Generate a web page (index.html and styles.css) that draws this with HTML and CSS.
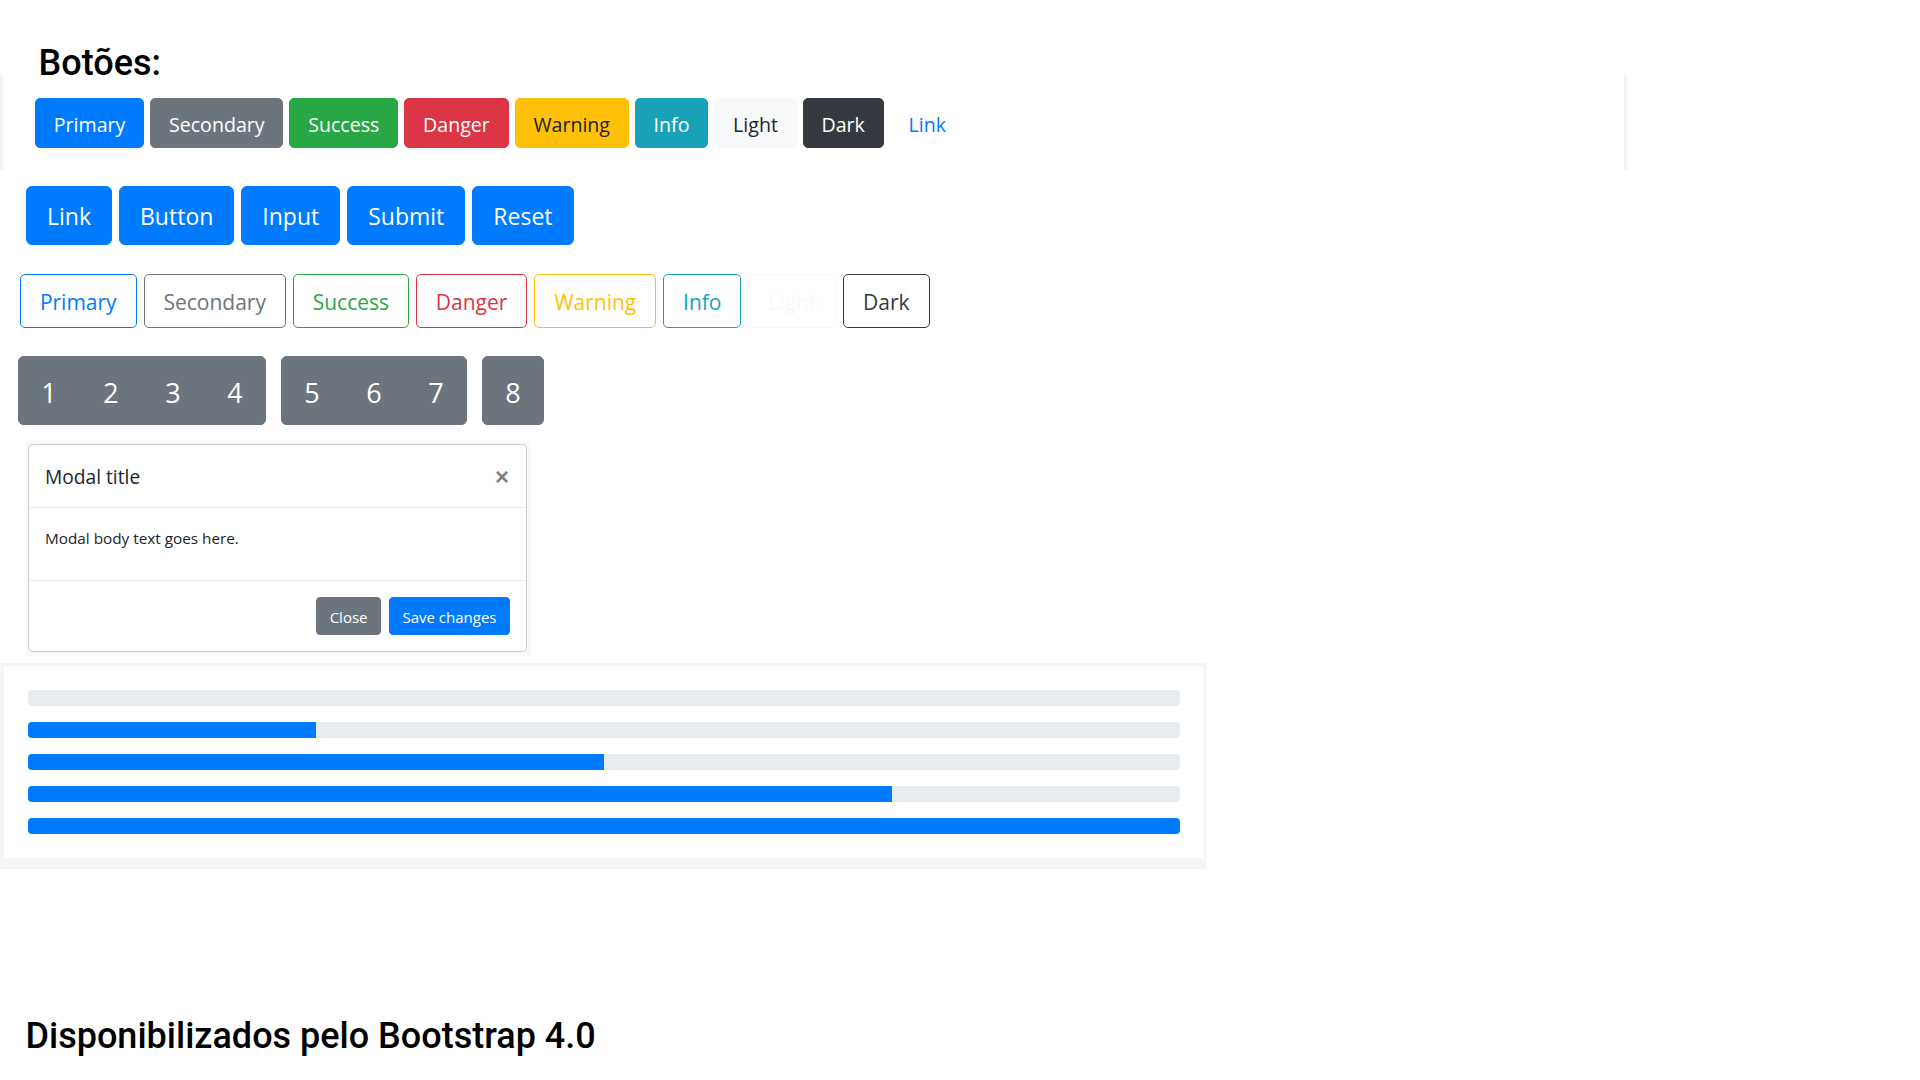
FILE: index.html
```html
<!DOCTYPE html>
<html lang="pt-BR">
<head>
<meta charset="utf-8">
<title>Botões</title>
<link rel="stylesheet" href="styles.css">
</head>
<body>
<h3 class="title">Botões:</h3>

<div class="btn-bar">
  <button class="btn btn-primary">Primary</button>
  <button class="btn btn-secondary">Secondary</button>
  <button class="btn btn-success">Success</button>
  <button class="btn btn-danger">Danger</button>
  <button class="btn btn-warning">Warning</button>
  <button class="btn btn-info">Info</button>
  <button class="btn btn-light">Light</button>
  <button class="btn btn-dark">Dark</button>
  <button class="btn btn-link">Link</button>
</div>

<div class="row-lg">
  <a class="btn-lg" href="#">Link</a>
  <button class="btn-lg" type="button">Button</button>
  <input class="btn-lg" type="button" value="Input">
  <input class="btn-lg" type="submit" value="Submit">
  <input class="btn-lg" type="reset" value="Reset">
</div>

<div class="row-outline">
  <button class="btn-o o-primary">Primary</button>
  <button class="btn-o o-secondary">Secondary</button>
  <button class="btn-o o-success">Success</button>
  <button class="btn-o o-danger">Danger</button>
  <button class="btn-o o-warning">Warning</button>
  <button class="btn-o o-info">Info</button>
  <button class="btn-o o-light">Light</button>
  <button class="btn-o o-dark">Dark</button>
</div>

<div class="toolbar">
  <div class="group">
    <button class="gbtn">1</button>
    <button class="gbtn">2</button>
    <button class="gbtn">3</button>
    <button class="gbtn">4</button>
  </div>
  <div class="group">
    <button class="gbtn">5</button>
    <button class="gbtn">6</button>
    <button class="gbtn">7</button>
  </div>
  <div class="group">
    <button class="gbtn">8</button>
  </div>
</div>

<div class="modal-wrap">
  <div class="modal">
    <div class="modal-header">
      <h5 class="modal-title">Modal title</h5>
      <span class="close">×</span>
    </div>
    <div class="modal-body">
      <p>Modal body text goes here.</p>
    </div>
    <div class="modal-footer">
      <button class="mbtn mbtn-secondary">Close</button>
      <button class="mbtn mbtn-primary">Save changes</button>
    </div>
  </div>
</div>

<div class="progress-card">
  <div class="progress-inner">
    <div class="progress"><div class="progress-bar" style="width:0%"></div></div>
    <div class="progress"><div class="progress-bar" style="width:25%"></div></div>
    <div class="progress"><div class="progress-bar" style="width:50%"></div></div>
    <div class="progress"><div class="progress-bar" style="width:75%"></div></div>
    <div class="progress"><div class="progress-bar" style="width:100%"></div></div>
  </div>
</div>

<h3 class="footer-title">Disponibilizados pelo Bootstrap 4.0</h3>
</body>
</html>
```

FILE: styles.css
```css
* { box-sizing: border-box; }

body {
  margin: 0;
  font-family: "Open Sans", "Noto Sans", sans-serif;
  color: #212529;
  background: #fff;
}

.title {
  margin: 0 0 0 38.5px;
  padding-top: 52px;
  font-family: Roboto, "Liberation Sans", sans-serif;
  font-weight: 500;
  font-size: 36px;
  line-height: 23px;
  color: #000;
}

/* first row */
.btn-bar {
  width: 1627px;
  height: 95px;
  border-left: 3px solid #f4f4f5;
  border-right: 3px solid #f4f4f5;
  padding: 23px 0 0 32px;
  display: flex;
  gap: 6px;
  align-items: flex-start;
}

.btn {
  height: 50px;
  padding: 3.5px 17.8px 0;
  display: inline-flex;
  align-items: center;
  border: 1px solid transparent;
  border-radius: 5px;
  font-family: "Open Sans", "Noto Sans", sans-serif;
  font-size: 19.6px;
  line-height: 30px;
  color: #fff;
  background: none;
}
.btn-primary { background: #007bff; border-color: #007bff; }
.btn-secondary { background: #6c757d; border-color: #6c757d; }
.btn-success { background: #28a745; border-color: #28a745; }
.btn-danger { background: #dc3545; border-color: #dc3545; }
.btn-warning { background: #ffc107; border-color: #ffc107; color: #212529; }
.btn-info { background: #17a2b8; border-color: #17a2b8; }
.btn-light { background: #f8f9fa; border-color: #f8f9fa; color: #212529; }
.btn-dark { background: #343a40; border-color: #343a40; }
.btn-link { color: #007bff; }

/* second row */
.row-lg {
  margin: 16px 0 0 26px;
  display: flex;
  gap: 7px;
}
.btn-lg {
  height: 59px;
  padding: 2.5px 20px 0;
  display: inline-flex;
  align-items: center;
  border: 1px solid #007bff;
  border-radius: 6px;
  background: #007bff;
  color: #fff;
  font-family: "Open Sans", "Noto Sans", sans-serif;
  font-size: 23px;
  line-height: 35px;
  text-decoration: none;
}

/* outline row */
.row-outline {
  margin: 29px 0 0 20px;
  display: flex;
  gap: 7px;
}
.btn-o {
  height: 54px;
  padding: 1px 18.9px 0;
  display: inline-flex;
  align-items: center;
  border: 1px solid;
  border-radius: 5px;
  background: #fff;
  font-family: "Open Sans", "Noto Sans", sans-serif;
  font-size: 21px;
  line-height: 32px;
}
.o-primary { color: #007bff; border-color: #007bff; }
.o-secondary { color: #6c757d; border-color: #6c757d; }
.o-success { color: #28a745; border-color: #28a745; }
.o-danger { color: #dc3545; border-color: #dc3545; }
.o-warning { color: #ffc107; border-color: #ffc107; }
.o-info { color: #17a2b8; border-color: #17a2b8; }
.o-light { color: #f8f9fa; border-color: #f8f9fa; }
.o-dark { color: #343a40; border-color: #343a40; }

/* button groups */
.toolbar {
  margin: 28px 0 0 18px;
  display: flex;
  gap: 15px;
}
.group {
  display: flex;
  border-radius: 6px;
  overflow: hidden;
}
.gbtn {
  width: 62px;
  height: 69px;
  padding: 4px 0 0;
  border: 1px solid #6c757d;
  background: #6c757d;
  color: #fff;
  font-family: "Open Sans", "Noto Sans", sans-serif;
  font-size: 27px;
  line-height: 41px;
  text-align: center;
}

/* modal */
.modal-wrap {
  margin: 16px 0 0 26px;
  width: fit-content;
  background: #f9f9f9;
  padding: 3px 4px 4px 2px;
}
.modal {
  width: 499px;
  background: #fff;
  border: 1px solid rgba(0, 0, 0, 0.2);
  border-radius: 5px;
}
.modal-header {
  display: flex;
  align-items: flex-start;
  justify-content: space-between;
  padding: 16px;
  border-bottom: 1px solid #e9ecef;
}
.modal-title {
  margin: 0;
  padding-top: 2px;
  font-size: 19.2px;
  font-weight: 400;
  line-height: 28px;
  color: #212529;
}
.close {
  margin-top: 3.5px;
  margin-right: 1px;
  font-family: "Liberation Sans", Arial, sans-serif;
  font-size: 24px;
  font-weight: 700;
  line-height: 24px;
  color: #000;
  opacity: 0.5;
}
.modal-body {
  padding: 16px;
  border-bottom: 1px solid #e9ecef;
}
.modal-body p {
  margin: 0 0 14.5px;
  padding-top: 1.5px;
  font-size: 15.3px;
  line-height: 24px;
}
.modal-footer {
  display: flex;
  justify-content: flex-end;
  gap: 8px;
  padding: 16px;
}
.mbtn {
  height: 38px;
  padding: 2px 12.5px 0;
  border: 1px solid transparent;
  border-radius: 4px;
  font-family: "Open Sans", "Noto Sans", sans-serif;
  font-size: 15px;
  line-height: 24px;
  color: #fff;
}
.mbtn-secondary { background: #6c757d; border-color: #6c757d; }
.mbtn-primary { background: #007bff; border-color: #007bff; }

/* progress */
.progress-card {
  margin-top: 7px;
  width: 1206px;
  background: #f5f6f8;
  padding: 3px 3px 11px 4px;
}
.progress-inner {
  background: #fff;
  padding: 24px 23px 24px 24px;
  display: flex;
  flex-direction: column;
  gap: 16px;
}
.progress {
  height: 16px;
  background: #e9ecef;
  border-radius: 4px;
  overflow: hidden;
}
.progress-bar {
  height: 100%;
  background: #007bff;
}

.footer-title {
  margin: 146px 0 0 25.5px;
  font-family: Roboto, "Liberation Sans", sans-serif;
  font-weight: 500;
  font-size: 36px;
  line-height: 42px;
  color: #000;
}
```
